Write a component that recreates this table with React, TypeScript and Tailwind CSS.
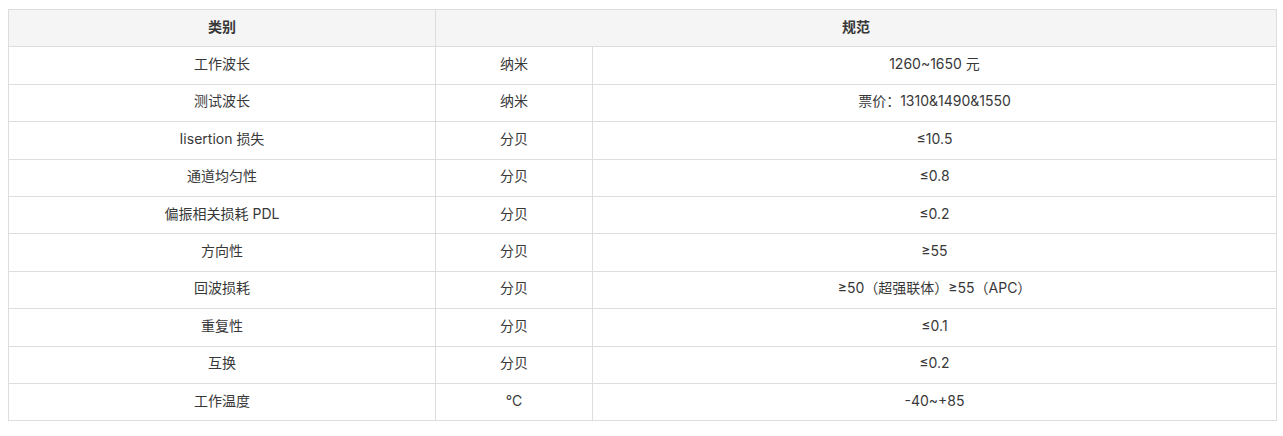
import React from "react";

const rows: [string, string, string][] = [
  ["工作波长", "纳米", "1260~1650 元"],
  ["测试波长", "纳米", "票价：1310&1490&1550"],
  ["Iisertion 损失", "分贝", "≤10.5"],
  ["通道均匀性", "分贝", "≤0.8"],
  ["偏振相关损耗 PDL", "分贝", "≤0.2"],
  ["方向性", "分贝", "≥55"],
  ["回波损耗", "分贝", "≥50（超强联体）≥55（APC）"],
  ["重复性", "分贝", "≤0.1"],
  ["互换", "分贝", "≤0.2"],
  ["工作温度", "°C", "-40~+85"],
];

export default function App() {
  return (
    <div
      className="bg-white w-[1283px] h-[436px] pt-[9px] pl-[8px]"
      style={{ fontFamily: '"Inter", "Noto Sans CJK SC", sans-serif' }}
    >
      <table className="w-[1268px] border-collapse table-fixed text-[14px] text-[#383838]">
        <colgroup>
          <col className="w-[427px]" />
          <col className="w-[157px]" />
          <col className="w-[684px]" />
        </colgroup>
        <thead>
          <tr className="h-[37.4px] bg-[#f5f5f5]">
            <th className="border border-[#ddd] font-bold text-center pt-0 pb-[4px] px-0">类别</th>
            <th colSpan={2} className="border border-[#ddd] font-bold text-center pt-0 pb-[4px] px-0">规范</th>
          </tr>
        </thead>
        <tbody>
          {rows.map((r, i) => (
            <tr key={i} className="h-[37.4px]">
              <td className="border border-[#ddd] text-center pt-0 pb-[4px] px-0">{r[0]}</td>
              <td className="border border-[#ddd] text-center pt-0 pb-[4px] px-0">{r[1]}</td>
              <td className="border border-[#ddd] text-center pt-0 pb-[4px] px-0">{r[2]}</td>
            </tr>
          ))}
        </tbody>
      </table>
    </div>
  );
}
